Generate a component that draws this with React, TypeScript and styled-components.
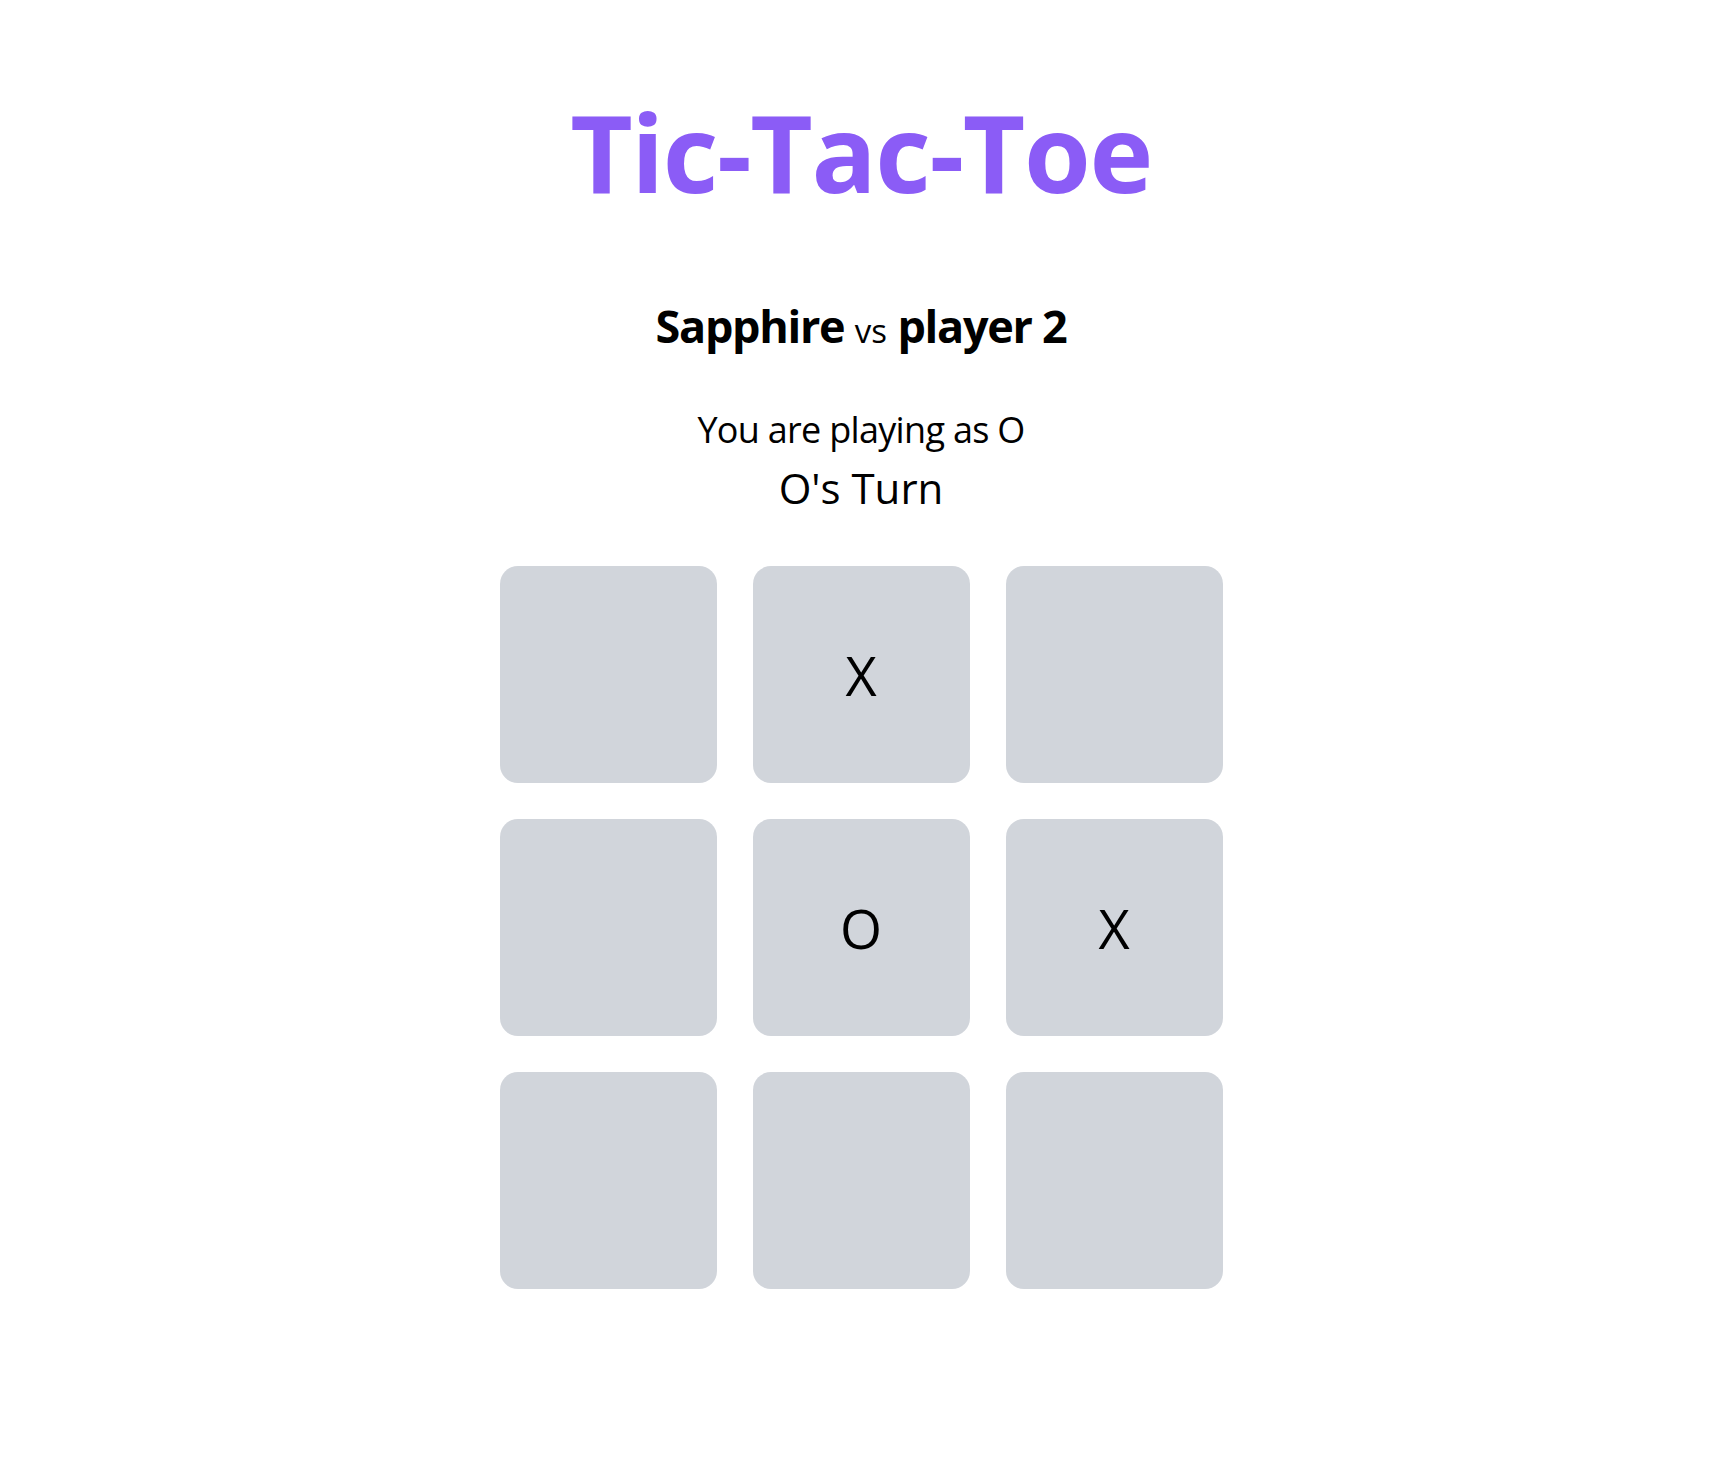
import React from 'react';
import styled, { createGlobalStyle } from 'styled-components';

type Mark = 'X' | 'O' | null;

const board: Mark[] = [null, 'X', null, null, 'O', 'X', null, null, null];

const GlobalStyle = createGlobalStyle`
  html, body {
    margin: 0;
    padding: 0;
    background: #fff;
  }
  body {
    font-family: "Open Sans", "Noto Sans", "Liberation Sans", sans-serif;
    color: #000;
  }
`;

const Page = styled.main`
  display: flex;
  flex-direction: column;
  align-items: center;
  padding: 98px 10px 0 0;
  text-align: center;
`;

const Title = styled.h1`
  margin: 0;
  font-size: 108px;
  line-height: 1;
  font-weight: 700;
  color: #8b5cf6;
  letter-spacing: -1.4px;
`;

const Players = styled.h2`
  margin: 97px 0 0;
  font-size: 45px;
  line-height: 1;
  font-weight: 700;
  letter-spacing: -1.3px;

  .vs {
    font-size: 33px;
    font-weight: 400;
    letter-spacing: 0;
  }
`;

const Info = styled.p<{ $size: number; $gap: number; $spacing: number }>`
  margin: ${(p) => p.$gap}px 0 0;
  font-size: ${(p) => p.$size}px;
  line-height: 1;
  font-weight: 400;
  letter-spacing: ${(p) => p.$spacing}px;
`;

const Board = styled.div`
  margin-top: 57px;
  display: grid;
  grid-template-columns: repeat(3, 217px);
  grid-auto-rows: 217px;
  gap: 36px;
`;

const Cell = styled.button`
  display: flex;
  align-items: center;
  justify-content: center;
  border: none;
  padding: 0;
  border-radius: 18px;
  background: #d1d5db;
  font-family: inherit;
  font-size: 54px;
  font-weight: 400;
  color: #000;
  cursor: pointer;
`;

const App = () => {
  return (
    <>
      <GlobalStyle />
      <Page>
        <Title>Tic-Tac-Toe</Title>
        <Players>
          Sapphire <span className="vs">vs</span> player 2
        </Players>
        <Info $size={36} $gap={64} $spacing={-0.7}>
          You are playing as O
        </Info>
        <Info $size={42} $gap={19} $spacing={0}>
          O's Turn
        </Info>
        <Board>
          {board.map((mark, i) => (
            <Cell key={i}>{mark}</Cell>
          ))}
        </Board>
      </Page>
    </>
  );
};

export default App;
